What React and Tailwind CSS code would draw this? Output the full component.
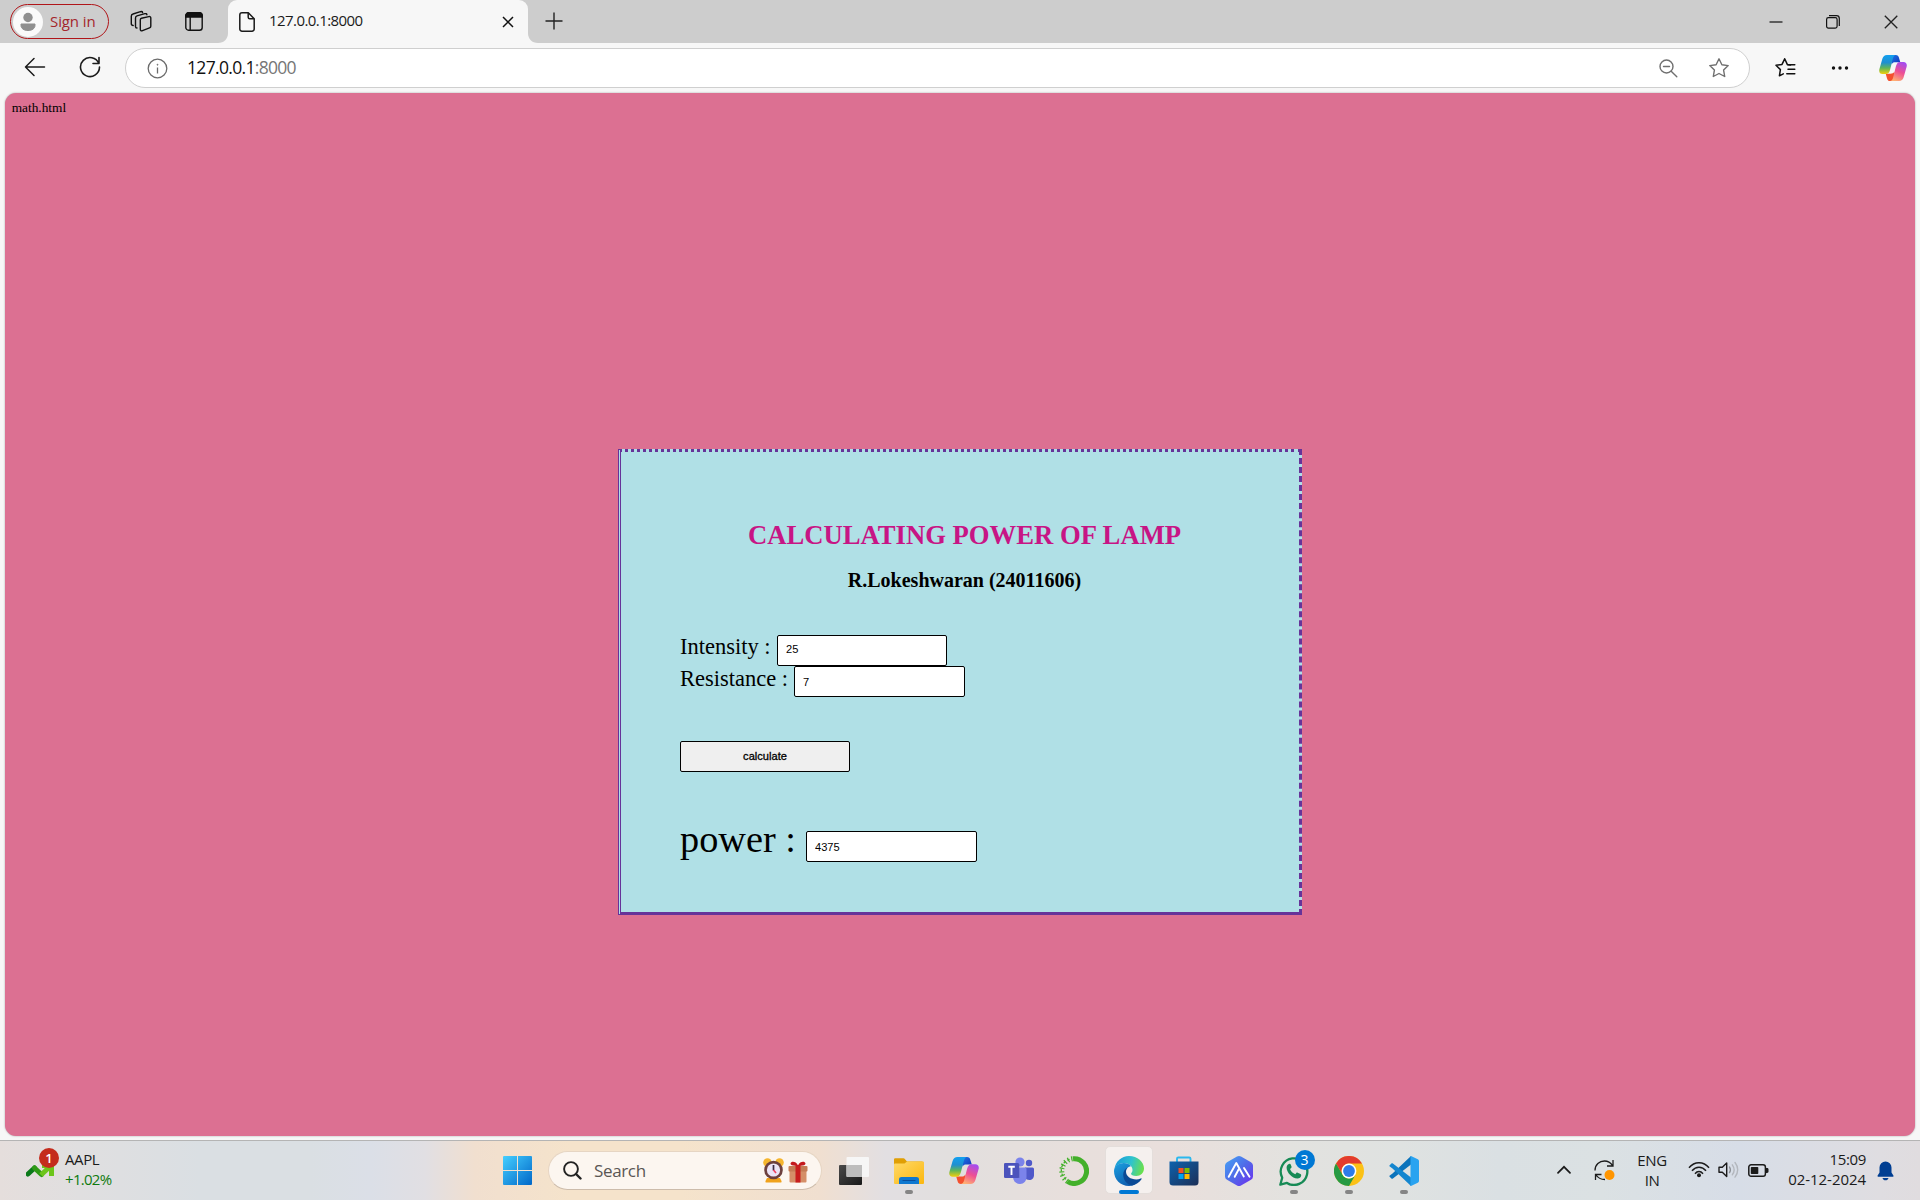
import React from "react";

const ui = "font-['Open_Sans','Noto_Sans',sans-serif]";

function Svg({ w, h, className = "", children, ...rest }) {
  return (
    <svg width={w} height={h} viewBox={`0 0 ${w} ${h}`} fill="none" className={`block shrink-0 ${className}`} {...rest}>
      {children}
    </svg>
  );
}

function Copilot({ w, h, id }) {
  return (
    <svg width={w} height={h} viewBox="0 0 30 27" preserveAspectRatio="none" className="block shrink-0">
      <defs>
        <linearGradient id={id + "a"} x1="0" y1="0" x2="0" y2="1">
          <stop offset="0" stopColor="#12a0f0" />
          <stop offset=".4" stopColor="#1f8fd0" />
          <stop offset=".68" stopColor="#5fb55a" />
          <stop offset="1" stopColor="#f3cf0a" />
        </linearGradient>
        <linearGradient id={id + "b"} x1=".7" y1="0" x2=".3" y2="1">
          <stop offset="0" stopColor="#a44cf0" />
          <stop offset=".5" stopColor="#ee4f93" />
          <stop offset="1" stopColor="#ffb173" />
        </linearGradient>
        <linearGradient id={id + "c"} x1="0" y1="0" x2="1" y2="1">
          <stop offset="0" stopColor="#1b78e8" />
          <stop offset="1" stopColor="#1533b8" />
        </linearGradient>
      </defs>
      <path d="M13 0h5c2 0 2.800 1 3.300 2.700L22.800 7.500h-5c-2.200 0-3 .3-4.300 2z" fill={`url(#${id}c)`} />
      <path d="M17 27h-5c-2 0-2.900-1-3.400-2.700L7.200 19.500h5c2.200 0 3-.3 4.300-2z" fill="#f4502e" />
      <path d="M8.500 0H18c-1.500.2-2.400 1.400-3 3.200l-3.200 12.300C11 18.200 9.700 19.800 7.500 19.800H3.700C1 19.800-.3 17.600.4 14.900L3.600 4C4.400 1.400 6 0 8.500 0z" fill={`url(#${id}a)`} />
      <path d="M21.500 27H12c1.500-.2 2.400-1.400 3-3.200l3.200-12.300C19 8.800 20.300 7.200 22.500 7.200h3.800c2.700 0 4 2.200 3.300 4.900L26.400 23c-.8 2.600-2.400 4-4.900 4z" fill={`url(#${id}b)`} />
    </svg>
  );
}

function TabStrip() {
  return (
    <div className="flex h-[43px] items-start bg-[#cdcdcd]">
      <div className="ml-[10px] mt-[4px] flex h-[35px] w-[99px] items-center rounded-full border-[1.5px] border-[#b01519] pl-[2px]">
        <Svg w={30} h={30}>
          <circle cx="15" cy="15" r="15" fill="#fafafa" />
          <circle cx="15" cy="10.500" r="4.700" fill="#8f8f8f" />
          <path d="M8 17h14v1.500c0 3-3 5-7 5s-7-2-7-5z" fill="#8f8f8f" stroke="#8f8f8f" strokeLinejoin="round" />
        </Svg>
        <span className="ml-[7px] whitespace-nowrap pb-[2px] text-[15px] leading-5 tracking-[-0.1px] text-[#a4262c]">Sign in</span>
      </div>
      <Svg w={22} h={22} className="ml-[21px] mt-[10px]" stroke="#111" strokeWidth="1.400" strokeLinejoin="round" strokeLinecap="round">
        <path d="M11.500 8.300l7.300-1.700c1.200-.3 2 .4 2 1.400v8.200c0 .9-.5 1.400-1.300 1.700l-7 2.800c-1.300.5-2.200-.1-2.200-1.400V10c0-.9.400-1.500 1.200-1.700z" />
        <path d="M7 18c-.9 0-1.500-.6-1.500-1.600V8c0-1.200.5-1.800 1.500-2.100l7.800-2.200c1.100-.3 1.900.1 2.100 1" />
        <path d="M3.200 15.500c-1.200 0-1.900-.7-1.900-1.800V6.200c0-1.200.6-1.900 1.700-2.200l7.500-2.300c1.100-.3 1.900.1 2.100.8" />
      </Svg>
      <Svg w={18} h={20} className="ml-[33px] mt-[12px]" stroke="#111" strokeWidth="1.400">
        <rect x=".8" y=".8" width="16.400" height="17.400" rx="2.800" />
        <path d="M.8 5V3.600A2.800 2.800 0 013.600.8h10.800a2.800 2.800 0 012.800 2.800V5z" fill="#111" />
        <path d="M5.200 5v13" />
      </Svg>
      <Svg w={10} h={10} className="ml-[15px] self-end">
        <path d="M10 0v10H0c6 0 10-4 10-10z" fill="#f7f7f7" />
      </Svg>
      <div className="flex h-[43px] w-[300px] items-center rounded-t-[9px] bg-[#f7f7f7] pl-[11px] pr-[14px]">
        <Svg w={16} h={20} stroke="#1b1b1b" strokeWidth="1.500" strokeLinejoin="round">
          <path d="M3 .8h6.300l5.900 6V17a2.200 2.200 0 01-2.200 2.200H3A2.200 2.200 0 01.8 17V3A2.200 2.200 0 013 .8z" />
          <path d="M9.200.8v4.500c0 .9.600 1.500 1.500 1.500h4.500" />
        </Svg>
        <span className="ml-[14px] pb-[4px] text-[15px] leading-5 tracking-[-0.570px] text-[#1b1b1b]">127.0.0.1:8000</span>
        <Svg w={12} h={12} className="ml-auto" stroke="#111" strokeWidth="1.500">
          <path d="M1 1l10 10M11 1L1 11" />
        </Svg>
      </div>
      <Svg w={10} h={10} className="self-end">
        <path d="M0 0v10h10C4 10 0 6 0 0z" fill="#f7f7f7" />
      </Svg>
      <Svg w={18} h={18} className="ml-[7px] mt-[12px]" stroke="#222" strokeWidth="1.400">
        <path d="M9 .5v17M.5 9h17" />
      </Svg>
      <div className="ml-auto flex h-[43px] items-center pr-[22px]">
        <Svg w={14} h={14} stroke="#111" strokeWidth="1.200">
          <path d="M.5 7h13" />
        </Svg>
        <Svg w={14} h={14} className="ml-[43px]" stroke="#111" strokeWidth="1.200">
          <rect x=".6" y="2.600" width="10.500" height="10.500" rx="1.800" />
          <path d="M3 .6h7.500a2.800 2.800 0 012.800 2.800v7.500" />
        </Svg>
        <Svg w={14} h={14} className="ml-[44px]" stroke="#222" strokeWidth="1.300">
          <path d="M.8.800l12.500 12.500M13.300.8L.8 13.300" />
        </Svg>
      </div>
    </div>
  );
}

function Toolbar() {
  return (
    <div className="flex h-[50px] items-center bg-[#f7f7f7]">
      <Svg w={22} h={20} className="mb-[2px] ml-[24px]" stroke="#1b1b1b" strokeWidth="1.500" strokeLinecap="round" strokeLinejoin="round">
        <path d="M10 1.500L1.500 10l8.500 8.500M1.500 10H20.500" />
      </Svg>
      <Svg w={22} h={22} className="mb-[2px] ml-[33px]" stroke="#1b1b1b" strokeWidth="1.600" strokeLinecap="round" strokeLinejoin="round">
        <path d="M19.800 7.500A9.500 9.500 0 1020.500 11M20 1.500v6h-6" />
      </Svg>
      <div className="ml-[24px] flex h-[40px] w-[1625px] items-center rounded-full border border-[#cfcfcf] bg-white pl-[21px] pr-[19px]">
        <Svg w={21} h={21} stroke="#6b6b6b" strokeWidth="1.300">
          <circle cx="10.500" cy="10.500" r="9.300" />
          <path d="M10.500 9.500v6" />
          <circle cx="10.500" cy="6.700" r=".5" fill="#6b6b6b" strokeWidth=".8" />
        </Svg>
        <span className="ml-[19px] pb-[3px] text-[17.5px] leading-6 tracking-[-0.680px] text-[#111]">
          127.0.0.1<span className="text-[#767676]">:8000</span>
        </span>
        <Svg w={19} h={19} className="ml-auto" stroke="#6f6f6f" strokeWidth="1.400" strokeLinecap="round">
          <circle cx="7.500" cy="7.500" r="6.500" />
          <path d="M12.200 12.200l5.600 5.600M4.500 7.500h6" />
        </Svg>
        <Svg w={22} h={22} className="ml-[30px]" stroke="#6f6f6f" strokeWidth="1.400" strokeLinejoin="round">
          <path d="M11 1.800l2.900 5.900 6.300.9-4.600 4.500 1.100 6.400L11 16.500l-5.700 3 1.100-6.400L1.800 8.600l6.300-.9z" />
        </Svg>
      </div>
      <Svg w={22} h={22} className="ml-[24px]" stroke="#111" strokeWidth="1.500" strokeLinejoin="round" strokeLinecap="round">
        <path d="M16.500 8l-3.100-.4L10.700 1.800 8 7.400l-6 .9 4.400 4.300-1 6.200 3.900-2" />
        <path d="M13.800 7.800h7M14 12.300h6.800M12.800 16.800h8" />
      </Svg>
      <Svg w={18} h={6} className="ml-[35px]">
        <circle cx="2.500" cy="3" r="1.700" fill="#111" />
        <circle cx="9" cy="3" r="1.700" fill="#111" />
        <circle cx="15.500" cy="3" r="1.700" fill="#111" />
      </Svg>
      <div className="ml-[30px]">
        <Copilot w={28} h={26} id="top" />
      </div>
    </div>
  );
}

function Field({ value, className = "" }) {
  return (
    <input
      type="text"
      defaultValue={value}
      className={`block h-[31px] rounded-[2px] border border-black bg-white pl-[8px] font-['Liberation_Sans',Arial,sans-serif] text-[11.1px] text-black outline-none ${className}`}
    />
  );
}

function Page() {
  return (
    <div className="bg-[#f7f7f7] px-[5px] pb-[4px]">
      <div className="h-[1043px] overflow-hidden rounded-[11px] bg-[#dc7092] font-['Liberation_Serif','Times_New_Roman',serif] text-black shadow-[0_0_2px_rgba(0,0,0,0.35)]">
        <div className="pl-[6.700px] pt-[7px] text-[13.33px] leading-[15px]">math.html</div>
        <div className="ml-[613px] mt-[334px] h-[466px] w-[684px] border-[3px] border-[#663399] bg-[#b0e0e6] pl-[59px] pr-[50px] [border-style:dotted_dashed_solid_double]">
          <h1 className="mt-[68px] whitespace-nowrap text-center text-[26.67px] font-bold leading-[30px] text-[#c71585]">CALCULATING POWER OF LAMP</h1>
          <h2 className="mt-[19px] whitespace-nowrap text-center text-[20px] font-bold leading-[23px]">R.Lokeshwaran (24011606)</h2>
          <div className="mt-[43px] flex h-[31px]">
            <label className="w-[97px] whitespace-pre text-[22.5px] leading-[24px]">Intensity :</label>
            <Field value="25" className="w-[170px] pb-[3px]" />
          </div>
          <div className="flex h-[31px]">
            <label className="w-[114px] whitespace-pre text-[22.5px] leading-[26px]">Resistance :</label>
            <Field value="7" className="w-[171px]" />
          </div>
          <button className="mt-[44px] block h-[31px] w-[170px] rounded-[2px] border border-black bg-[#efefef] font-['Liberation_Sans',Arial,sans-serif] text-[11.1px] [-webkit-text-stroke:0.3px_black]">calculate</button>
          <div className="mt-[45px] flex">
            <label className="w-[126px] whitespace-pre text-[38.3px] leading-[44px]">power :</label>
            <Field value="4375" className="mt-[14px] w-[171px]" />
          </div>
        </div>
      </div>
    </div>
  );
}

function TaskbarApp({ children, running, active }) {
  return (
    <div className="relative flex h-[59px] w-[55px] items-center justify-center">
      {active && <div className="absolute left-[3.500px] top-[5px] h-[48px] w-[48px] rounded-[5px] border border-[#e4dedb] bg-[#f5f0ee]" />}
      <div className="relative">{children}</div>
      {running && <div className="absolute left-[23.500px] top-[49px] h-[4px] w-[8px] rounded-full bg-[#858585]" />}
      {active && <div className="absolute left-[17.500px] top-[49px] h-[4px] w-[20px] rounded-full bg-[#0078d4]" />}
    </div>
  );
}

function SearchBox() {
  return (
    <div className="ml-[16px] flex h-[39px] w-[274px] items-center rounded-full border border-[#e6d5c3] border-b-[#cdbcab] bg-[#fcf6f0] pl-[14px]">
      <Svg w={19} h={19} stroke="#222" strokeLinecap="round">
        <circle cx="8" cy="8" r="6.900" strokeWidth="1.900" />
        <path d="M13 13l4.500 4.500" strokeWidth="2.400" />
      </Svg>
      <span className="ml-[12px] text-[17px] leading-6 tracking-[-0.350px] text-[#5a5754]">Search</span>
      <Svg w={21} h={25} className="ml-auto">
        <circle cx="4.500" cy="4.500" r="4.300" fill="#f5b52e" />
        <circle cx="16.500" cy="4.500" r="4.300" fill="#f5b52e" />
        <path d="M4 20h13l1.500 3c.3 1-.2 1.500-1 1.500h-14c-.8 0-1.300-.5-1-1.500z" fill="#f0a21c" />
        <circle cx="10.500" cy="12" r="9.300" fill="#6d403e" />
        <circle cx="10.500" cy="12" r="6.600" fill="#ece4f7" />
        <path d="M10.500 7v5.500" stroke="#3b2b44" strokeWidth="1.700" />
        <path d="M10.500 12l2.500 3" stroke="#f04060" strokeWidth="1.600" />
      </Svg>
      <Svg w={20} h={22} className="ml-[4px] mr-[13px] mt-[3px]">
        <rect x="1.500" y="8" width="17" height="13.500" rx="1" fill="#d58f68" />
        <rect x=".5" y="5" width="19" height="5.500" rx="1" fill="#c47c55" />
        <rect x="7.500" y="4" width="5" height="17.500" fill="#c81e1e" />
        <path d="M10 4.500C8 0 3 0 2.500 2.500 2.500 4.500 6 5 10 4.500zm0 0c2-4.500 7-4.500 7.500-2C17.500 4.500 14 5 10 4.500z" fill="#c4191d" />
      </Svg>
    </div>
  );
}

function Taskbar() {
  return (
    <div className="flex h-[60px] items-stretch border-t border-[#b4b4b4] bg-[linear-gradient(90deg,#e5dedc_0px,#e0dfe0_80px,#dadfe3_200px,#dadfe3_310px,#dbdfe7_370px,#e1dfe3_425px,#f1dfcf_475px,#f5e3cb_570px,#f5e3cb_680px,#f0dfd0_820px,#e2dfe2_885px,#e2dfde_950px,#e8dfdc_1080px,#e9dfdc_1170px,#e3e2df_1290px,#dfe2e1_1400px,#dae0e3_1500px,#dbe1e3_1600px,#d7dde7_1740px,#dfdde1_1880px,#e0dcdf_1920px)]">
      <div className="ml-[26px] mt-[5px] w-[140px]">
        <div className="flex">
          <div className="relative mt-[17px] h-[16px] w-[28px]">
            <Svg w={28} h={16}>
              <path d="M2 11L8.500 5" stroke="#0b7a1a" strokeWidth="5" strokeLinecap="round" />
              <path d="M8.500 5l7 6.500" stroke="#2f9a16" strokeWidth="5" strokeLinecap="round" />
              <path d="M15 12L24 3.500" stroke="#6cc51a" strokeWidth="5" />
              <path d="M16 0h12v13h-5V5h-7z" fill="#6cc51a" />
            </Svg>
            <div className="absolute left-[13px] top-[-15px] flex h-[20px] w-[20px] items-center justify-center rounded-full bg-[#c42b1c] text-[13px] font-semibold leading-none text-white">1</div>
          </div>
          <div className="ml-[11px] mt-[3px] text-[15px] leading-5 tracking-[-0.400px]">
            <div className="text-[#1b1b1b]">AAPL</div>
            <div className="tracking-[-0.700px] text-[#0f7b0f]">+1.02%</div>
          </div>
        </div>
      </div>

      <div className="ml-[337px] flex items-center">
        <svg width="29" height="29" viewBox="0 0 29 29" className="block shrink-0">
          <defs>
            <linearGradient id="win" x1="0" y1="0" x2="1" y2="1">
              <stop offset="0" stopColor="#45cfff" />
              <stop offset="1" stopColor="#0067c8" />
            </linearGradient>
          </defs>
          <path d="M1 0h13v14H0V1a1 1 0 011-1zM15 0h13a1 1 0 011 1v13H15zM0 15h14v14H1a1 1 0 01-1-1zM15 15h14v13a1 1 0 01-1 1H15z" fill="url(#win)" />
        </svg>
        <SearchBox />
      </div>

      <div className="ml-[4px] flex">
        <TaskbarApp>
          <Svg w={30} h={28}>
            <defs>
              <linearGradient id="tv" x1="0" y1="0" x2="1" y2="1">
                <stop offset="0" stopColor="#4a4a4a" />
                <stop offset="1" stopColor="#181818" />
              </linearGradient>
            </defs>
            <rect y="8" width="23" height="20" rx="1" fill="url(#tv)" />
            <rect x="7.500" width="22.500" height="20" rx="1" fill="#f6f6f6" />
            <path d="M7.500 8H23v12H8.500a1 1 0 01-1-1z" fill="#bdbdbd" />
          </Svg>
        </TaskbarApp>
        <TaskbarApp running>
          <Svg w={30} h={26}>
            <defs>
              <linearGradient id="fo" x1="0" y1="0" x2="1" y2="1">
                <stop offset="0" stopColor="#ffd968" />
                <stop offset="1" stopColor="#fbb70f" />
              </linearGradient>
            </defs>
            <path d="M0 1.500A1.200 1.200 0 011.200.3h8.300c.6 0 1 .2 1.300.6L13 3.500h15.500V12H0z" fill="#e09f05" />
            <path d="M1 5.500h9.500L13 3.500h16a1 1 0 011 1V25a1 1 0 01-1 1H1a1 1 0 01-1-1V6.500a1 1 0 011-1z" fill="url(#fo)" />
            <path d="M5 26v-4.500c0-1.700 1-2.500 2.500-2.500h15c1.500 0 2.500.8 2.500 2.500V26z" fill="#0f78d0" />
            <path d="M9 22.500h12" stroke="#0a4e9c" strokeWidth="1.200" strokeLinecap="round" />
          </Svg>
        </TaskbarApp>
        <TaskbarApp>
          <Copilot w={30} h={27} id="bar" />
        </TaskbarApp>
        <TaskbarApp>
          <Svg w={30} h={27}>
            <path d="M21 10.500h7.500A1.500 1.500 0 0130 12v6c0 3-2 5-4.700 5-2 0-3.300-.8-4.300-2z" fill="#5059c9" />
            <circle cx="25" cy="6" r="3.200" fill="#5059c9" />
            <path d="M9 10.500h12A1.500 1.500 0 0122.500 12v8c0 4-2.700 7-6.500 7s-7-3-7-7z" fill="#7b83eb" />
            <circle cx="16" cy="5" r="4.600" fill="#7b83eb" />
            <path d="M9 7h6.500v14H9z" fill="#000" fillOpacity=".18" />
            <rect y="6" width="15" height="15" rx="1.300" fill="#4b53bc" />
            <path d="M4.300 9.800h6.500M7.500 9.800v8.200" stroke="#fff" strokeWidth="1.900" />
          </Svg>
        </TaskbarApp>
        <TaskbarApp>
          <Svg w={30} h={30}>
            <path d="M14 2.700a12.400 12.400 0 11-5.500 22.800" stroke="#43b02a" strokeWidth="5" />
            <path d="M8.500 25.500A12.400 12.400 0 0114 2.700" stroke="#43b02a" strokeWidth="5" strokeDasharray="1.200 2.400" />
            <path d="M7 23.300A11.200 11.200 0 0113 3" stroke="#43b02a" strokeWidth="1.300" strokeDasharray="2.500 2" />
          </Svg>
        </TaskbarApp>
        <TaskbarApp active>
          <Svg w={30} h={30}>
            <defs>
              <linearGradient id="ed1" x1="0" y1=".3" x2="1" y2=".5">
                <stop offset="0" stopColor="#1899d8" />
                <stop offset=".55" stopColor="#2fc3cf" />
                <stop offset="1" stopColor="#6ae04c" />
              </linearGradient>
              <linearGradient id="ed2" x1="0" y1="0" x2=".6" y2="1">
                <stop offset="0" stopColor="#1ba0e0" />
                <stop offset="1" stopColor="#0f5cae" />
              </linearGradient>
            </defs>
            <path d="M.5 13C1.500 5.500 7.500 0 15 0c8.500 0 15 6 15 12.500 0 4.500-3.500 7.500-7.700 7.500-3.500 0-5.300-1-5.300-2.200 0-.9 1.500-1.500 1.500-3.900C18.500 10 14.500 7 9.700 7 5.500 7 2 9.500.5 13z" fill="url(#ed1)" />
            <path d="M0 15C.2 10.500 4.500 7 9.700 7c3 0 5.700 1.200 7.300 3.200-3 .3-6 3.200-6 7.300 0 5.500 4.500 9.500 10 9.500 1 0 1.500-.1 2.200-.3C20.800 28.800 18 30 15 30 6.500 30 0 23.500 0 15z" fill="url(#ed2)" />
            <path d="M14 11.200c-3 1.300-4.800 4-4.800 7.300 0 5.500 3.800 10 8.800 11 4-.8 7.300-3 9.500-6.200.4-.6-.2-1.200-.8-.9-1.300.7-2.900 1-4.400 1C16.500 23.400 12 20 12 15.700c0-1.800.8-3.300 2-4.500z" fill="#0b4a95" />
          </Svg>
        </TaskbarApp>
        <TaskbarApp>
          <Svg w={30} h={30}>
            <defs>
              <linearGradient id="st" x1="0" y1="0" x2="1" y2="1">
                <stop offset="0" stopColor="#0d62ad" />
                <stop offset="1" stopColor="#1c2f57" />
              </linearGradient>
            </defs>
            <path d="M8 6V2.800A1.300 1.300 0 019.300 1.500h10.900A1.300 1.300 0 0121.500 2.800V6" stroke="#2bb8ee" strokeWidth="1.900" />
            <path d="M.5 5.500h29V26a3.500 3.500 0 01-3.500 3.500H4A3.500 3.500 0 01.5 26z" fill="url(#st)" />
            <path d="M9.500 12h5v5h-5z" fill="#f25022" />
            <path d="M15.500 12h5v5h-5z" fill="#7fba00" />
            <path d="M9.500 18h5v5h-5z" fill="#00a4ef" />
            <path d="M15.500 18h5v5h-5z" fill="#ffb900" />
          </Svg>
        </TaskbarApp>
        <TaskbarApp>
          <Svg w={28} h={30}>
            <defs>
              <linearGradient id="mm" x1="0" y1="0" x2="1" y2="1">
                <stop offset="0" stopColor="#45a5f5" />
                <stop offset=".5" stopColor="#506be8" />
                <stop offset="1" stopColor="#6e2bf0" />
              </linearGradient>
            </defs>
            <path d="M12 .6a4 4 0 014 0l10 5.600a4 4 0 012 3.400v10.800a4 4 0 01-2 3.400l-10 5.600a4 4 0 01-4 0L2 23.800a4 4 0 01-2-3.400V9.600a4 4 0 012-3.400z" fill="url(#mm)" />
            <path d="M3.700 20.800L11.300 7l7.500 13.500" stroke="#fff" strokeWidth="1.900" strokeLinecap="round" strokeLinejoin="round" />
            <path d="M9.700 20.800l4-7.500M19 12l5.500 8.800" stroke="#fff" strokeWidth="1.900" strokeLinecap="round" />
          </Svg>
        </TaskbarApp>
        <TaskbarApp running>
          <Svg w={30} h={30}>
            <path d="M1.300 28.700l1.900-7A13.300 13.300 0 118 26.900z" stroke="#178a55" strokeWidth="2.300" strokeLinejoin="round" />
            <path d="M10.500 7.700c-1.600.2-2.900 1.900-2.900 3.700 0 5.200 5.500 10.700 10.700 11 2 .1 3.700-1.200 3.900-3 0-.6-.2-1-.7-1.300L18.700 16.700c-.6-.3-1-.2-1.400.3l-1 1.300c-2.600-1-4.300-2.800-5.300-5.200l1.200-1.200c.4-.4.500-.8.300-1.400L11.700 8.400c-.2-.5-.6-.8-1.200-.7z" fill="#178a55" />
          </Svg>
          <div className="absolute left-[16px] top-[-6px] flex h-[20px] w-[20px] items-center justify-center rounded-full bg-[#0078d4] text-[14px] leading-none text-white">3</div>
        </TaskbarApp>
        <TaskbarApp running>
          <Svg w={30} h={30}>
            <circle cx="15" cy="15" r="15" fill="#fbc116" />
            <path d="M2 7.500A15 15 0 0128 7.500H15A7.500 7.500 0 008.500 18.700z" fill="#e33b2e" />
            <path d="M2 7.500l6.500 11.200A7.500 7.500 0 0021.500 18.700L15 30A15 15 0 012 7.500z" fill="#269a43" />
            <circle cx="15" cy="15" r="7.400" fill="#fff" />
            <circle cx="15" cy="15" r="5.900" fill="#2f7bea" />
          </Svg>
        </TaskbarApp>
        <TaskbarApp running>
          <Svg w={30} h={30}>
            <path d="M22 0l-18.500 17.500-2.700 2c-.5.400-.6.900-.1 1.300l1.700 1.600c.5.400 1 .4 1.500 0L22 8.500z" fill="#0b73bb" />
            <path d="M22 30L3.500 12.500l-2.700-2c-.5-.4-.6-.9-.1-1.300l1.700-1.600c.5-.4 1-.4 1.500 0L22 21.500z" fill="#1486cf" />
            <path d="M22 0l6.800 3.200c.8.400 1.200 1 1.200 1.800v20c0 .8-.4 1.400-1.200 1.800L22 30c-.7 0-.5-.2-.5-1V1c0-.8-.2-1 .5-1z" fill="#29a3f0" />
          </Svg>
        </TaskbarApp>
      </div>

      <div className="ml-auto flex items-start pr-[26px] text-[15px] leading-5 text-[#1b1b1b]">
        <Svg w={14} h={9} className="mt-[24px]" stroke="#1b1b1b" strokeWidth="1.700" strokeLinecap="round">
          <path d="M1 7.800l6-6 6 6" />
        </Svg>
        <Svg w={21} h={22} className="ml-[23px] mt-[18px]" stroke="#1b1b1b" strokeWidth="1.300">
          <path d="M1 11.500C1 5.500 5.500 2 10.500 2c3.500 0 6 1.500 8 4.500M19 1v6h-6" />
          <path d="M1.500 21v-5.500h6M2 16c2 3 5 4.500 9 4.500" />
          <circle cx="15.500" cy="16" r="5" fill="#ff9500" stroke="none" />
        </Svg>
        <div className="ml-[21px] mt-[9px] w-[32px] text-center tracking-[-0.400px]">
          ENG
          <br />
          IN
        </div>
        <Svg w={22} h={17} className="ml-[20px] mt-[20px]" stroke="#1b1b1b" strokeWidth="1.500">
          <path d="M1 6.700c5.500-6.700 14.500-6.700 20 0M4 9.800c4-4.700 10-4.700 14 0M7 12.700c2.400-2.800 5.600-2.800 8 0" />
          <circle cx="11" cy="14.300" r="2" fill="#1b1b1b" stroke="none" />
        </Svg>
        <Svg w={21} h={18} className="ml-[8px] mt-[20px]" strokeWidth="1.400" strokeLinecap="round" strokeLinejoin="round">
          <path d="M1 6.200h3.300L8.700 2v13.500l-4.400-4.200H1z" stroke="#1b1b1b" />
          <path d="M11.500 6c1 1.600 1 4 0 5.600" stroke="#8d9197" />
          <path d="M14.300 3.800c2.200 3 2.200 7 0 10M17 1.500c3.600 4.400 3.600 10.200 0 14.600" stroke="#b3b7bd" />
        </Svg>
        <Svg w={21} h={13} className="ml-[9px] mt-[23px]">
          <rect x=".8" y=".8" width="16.600" height="11.400" rx="2.300" stroke="#1b1b1b" strokeWidth="1.500" />
          <rect x="2.800" y="3" width="7.500" height="7" rx=".8" fill="#1b1b1b" />
          <path d="M18 4h1c1 0 1.500.6 1.500 1.400v2.200c0 .8-.5 1.400-1.500 1.400h-1z" fill="#1b1b1b" />
        </Svg>
        <div className="ml-[10px] mt-[8px] w-[87px] whitespace-nowrap text-right">
          <span className="tracking-[-0.350px]">15:09</span>
          <br />
          <span className="tracking-[-0.050px]">02-12-2024</span>
        </div>
        <Svg w={17} h={20} className="ml-[11px] mt-[20px]">
          <path d="M8.500.5a6 6 0 016 6v5l2 3.300c.2.500 0 .9-.6.900H1.100c-.6 0-.8-.4-.6-.9l2-3.300v-5a6 6 0 016-6zM5.500 17h6c-.4 1.500-1.500 2.300-3 2.300S5.900 18.500 5.500 17z" fill="#003e92" />
        </Svg>
      </div>
    </div>
  );
}

export default function App() {
  return (
    <div className={`h-[1200px] w-[1920px] overflow-hidden bg-[#f7f7f7] ${ui}`}>
      <TabStrip />
      <Toolbar />
      <Page />
      <Taskbar />
    </div>
  );
}
